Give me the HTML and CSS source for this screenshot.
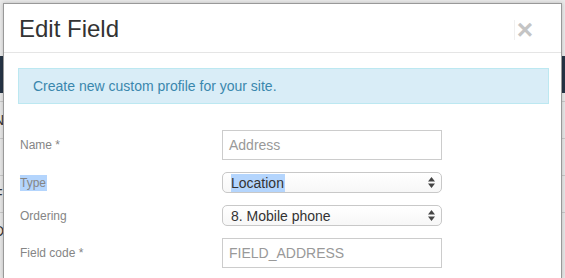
FILE: index.html
```html
<!DOCTYPE html>
<html>
<head>
    <title>Edit Field</title>
    <link rel="stylesheet" href="styles.css">
</head>
<body>
    <div class="backdrop">
        <div class="page-nav"></div>
        <div class="page-rows">
            <div class="page-row">N</div>
            <div class="page-row">r</div>
            <div class="page-row">F</div>
            <div class="page-row">D</div>
        </div>
    </div>

    <div class="modal">
        <div class="modal-header">
            <h3 class="modal-title">Edit Field</h3>
            <button class="modal-close">&times;</button>
        </div>
        <div class="modal-body">
            <div class="alert-info">Create new custom profile for your site.</div>

            <div class="form-row tall">
                <label class="form-label">Name *</label>
                <div class="text-input placeholder">Address</div>
            </div>
            <div class="form-row">
                <label class="form-label"><span class="selected">Type</span></label>
                <div class="select-input">
                    <span class="selected">Location</span>
                    <svg class="select-arrows" width="7" height="11" viewBox="0 0 7 11">
                        <path d="M3.5 0 L7 4.5 L0 4.5 Z M0 6.5 L7 6.5 L3.5 11 Z" fill="#444"/>
                    </svg>
                </div>
            </div>
            <div class="form-row">
                <label class="form-label">Ordering</label>
                <div class="select-input">
                    <span>8. Mobile phone</span>
                    <svg class="select-arrows" width="7" height="11" viewBox="0 0 7 11">
                        <path d="M3.5 0 L7 4.5 L0 4.5 Z M0 6.5 L7 6.5 L3.5 11 Z" fill="#444"/>
                    </svg>
                </div>
            </div>
            <div class="form-row tall">
                <label class="form-label">Field code *</label>
                <div class="text-input placeholder">FIELD_ADDRESS</div>
            </div>
        </div>
    </div>
</body>
</html>
```

FILE: styles.css
```css
body {
    margin: 0;
    font-family: "Helvetica Neue", "Liberation Sans", Arial, sans-serif;
    background-color: #e9e9e9;
    height: 278px;
    overflow: hidden;
}
.backdrop {
    height: 278px;
    background-color: #e6e6e6;
}
.page-nav {
    margin-top: 56px;
    height: 37px;
    background-color: #263546;
}
.page-rows {
    margin-top: 8px;
}
.page-row {
    height: 36px;
    border-top: 1px solid #c8c8c8;
    margin-left: -6px;
    font-size: 14px;
    line-height: 36px;
    color: #333;
}
.modal {
    position: absolute;
    top: 3px;
    left: 3px;
    width: 557px;
    height: 274px;
    background-color: white;
    border: 1px solid #999;
    border-bottom: none;
    box-shadow: 0 0 4px rgba(0, 0, 0, 0.2);
    overflow: hidden;
}
.modal-header {
    display: flex;
    align-items: center;
    justify-content: space-between;
    height: 48px;
    padding: 0 16px 0 15px;
    border-bottom: 1px solid #e5e5e5;
}
.modal-title {
    margin: 0;
    margin-top: 1px;
    font-size: 24px;
    font-weight: normal;
    color: #333;
}
.modal-close {
    margin-top: 4px;
    margin-right: 12px;
    padding: 0 0 0 2px;
    border: none;
    border-left: 1px solid #f0f0f0;
    background: none;
    font-family: "Liberation Sans", Arial, sans-serif;
    font-size: 28px;
    font-weight: bold;
    line-height: 20px;
    color: #c4c4c4;
}
.modal-body {
    padding: 15px 12px 0 14px;
}
.alert-info {
    height: 34px;
    padding-left: 14px;
    background-color: #d9edf7;
    border: 1px solid #bce8f1;
    font-size: 14px;
    line-height: 34px;
    color: #3a87ad;
    margin-bottom: 26px;
}
.form-row {
    display: flex;
    align-items: center;
    height: 21px;
    margin-bottom: 12px;
}
.form-row.tall {
    height: 30px;
}
.form-label {
    width: 202px;
    padding-left: 2px;
    font-size: 12px;
    color: #858585;
}
.selected {
    background-color: #b4d5fd;
    padding: 1px 1px 1px 0;
}
.text-input {
    box-sizing: border-box;
    width: 220px;
    height: 30px;
    padding-left: 6px;
    border: 1px solid #ccc;
    font-size: 14px;
    line-height: 28px;
    color: #333;
}
.text-input.placeholder {
    color: #999;
}
.select-input {
    box-sizing: border-box;
    display: flex;
    align-items: center;
    justify-content: space-between;
    width: 220px;
    height: 21px;
    padding: 0 6px 0 8px;
    border: 1px solid #c8c8c8;
    border-radius: 5px;
    background: linear-gradient(#fff, #f7f7f7);
    font-size: 14px;
    color: #333;
}
.select-arrows {
    display: block;
}
```
